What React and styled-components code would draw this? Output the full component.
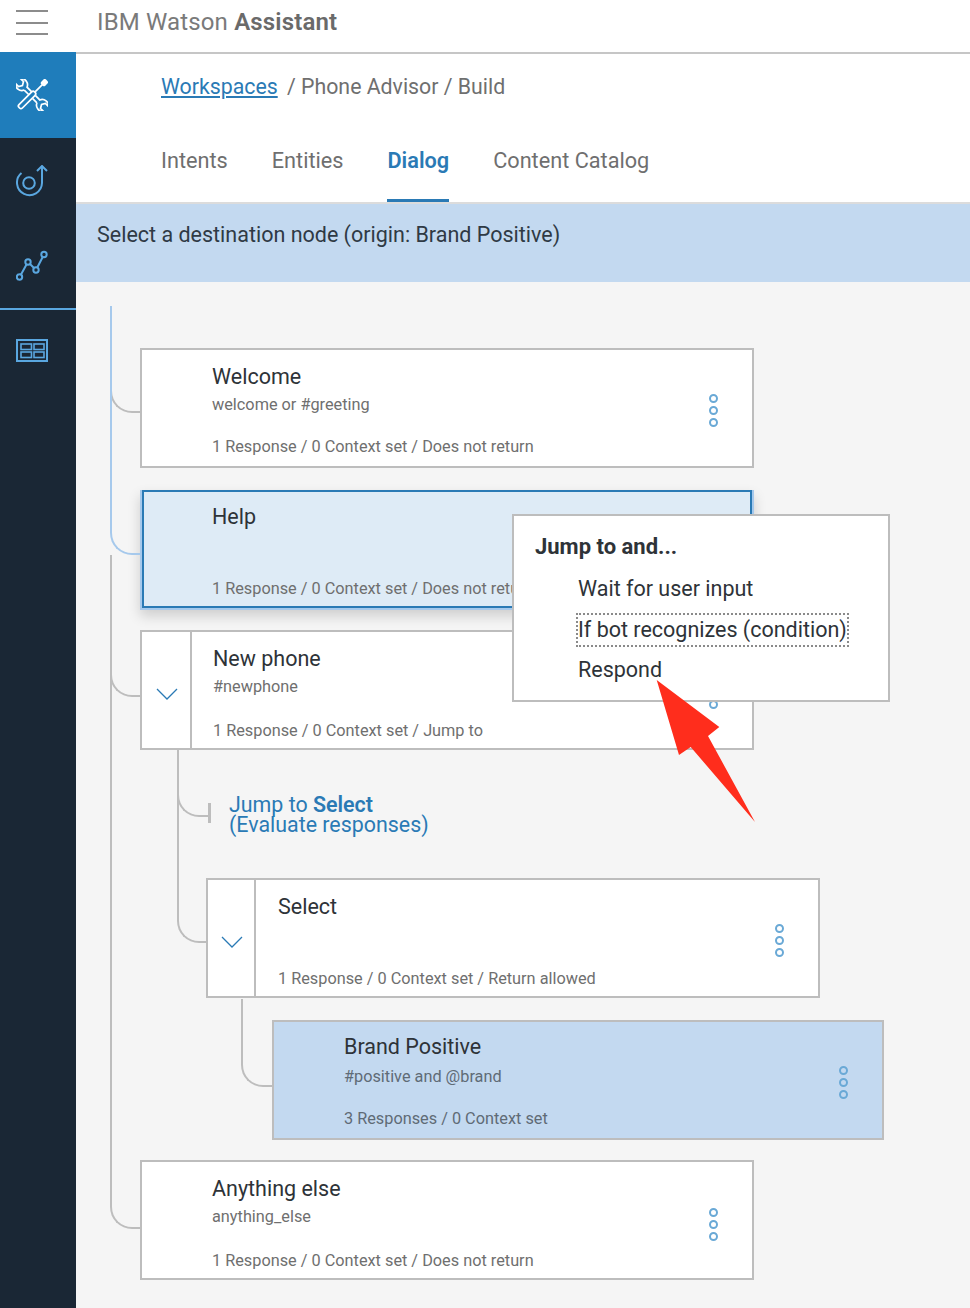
import styled, { createGlobalStyle } from "styled-components";

const GlobalStyle = createGlobalStyle`
  html, body {
    margin: 0;
    padding: 0;
    background: #f5f5f5;
  }
  * {
    box-sizing: border-box;
  }
  body {
    font-family: "Roboto", "Liberation Sans", sans-serif;
  }
`;

const Page = styled.div`
  position: relative;
  width: 970px;
  height: 1308px;
  overflow: hidden;
  display: flex;
  flex-direction: column;
`;

const Header = styled.header`
  height: 52px;
  flex: none;
  display: flex;
  background: #fff;
  padding-top: 10px;
`;

const Burger = styled.div`
  width: 32px;
  height: 25px;
  margin: 0 49px 0 16px;
  display: flex;
  flex-direction: column;
  justify-content: space-between;
  span {
    height: 2px;
    background: #8c8c8c;
  }
`;

const Brand = styled.div`
  font-size: 24px;
  letter-spacing: 0.15px;
  line-height: 25px;
  color: #7a7a7a;
  b {
    font-weight: 600;
    color: #6a6a6a;
  }
`;

const Body = styled.div`
  flex: 1;
  display: flex;
  min-height: 0;
`;

const Sidebar = styled.nav`
  width: 76px;
  flex: none;
  background: #1a2735;
`;

const NavItem = styled.div`
  height: ${(p) => p.$h}px;
  display: flex;
  align-items: center;
  padding-left: 16px;
  background: ${(p) => (p.$active ? "#1f7dbb" : "transparent")};
  color: ${(p) => (p.$active ? "#fff" : "#5aa7e0")};
`;

const NavDivider = styled.div`
  height: 2px;
  background: #5aa7e0;
`;

const Main = styled.main`
  flex: 1;
  min-width: 0;
  display: flex;
  flex-direction: column;
  background: #f5f5f5;
`;

const TopBar = styled.div`
  height: 152px;
  flex: none;
  background: #fff;
  border-top: 2px solid #c6c6c6;
  border-bottom: 2px solid #dcdcdc;
  padding-left: 85px;
`;

const Crumbs = styled.div`
  height: 62px;
  padding-top: 19px;
  font-size: 21.3px;
  line-height: 28px;
  color: #6f6f6f;
  a {
    color: #2a7ab5;
    text-decoration: underline;
    margin-right: 4px;
  }
`;

const Tabs = styled.div`
  display: flex;
  gap: 44px;
  height: 86px;
`;

const Tab = styled.div`
  height: 86px;
  padding-top: 31px;
  font-size: 21.7px;
  line-height: 28px;
  color: ${(p) => (p.$active ? "#2a7ab5" : "#6f6f6f")};
  font-weight: ${(p) => (p.$active ? 600 : 400)};
  border-bottom: 3px solid ${(p) => (p.$active ? "#2a7ab5" : "transparent")};
`;

const Banner = styled.div`
  height: 78px;
  flex: none;
  background: #c3d9f0;
  padding: 17px 0 0 21px;
  font-size: 21.5px;
  line-height: 28px;
  color: #2f3a45;
`;

const Tree = styled.div`
  flex: 1;
  padding: 66px 0 0 64px;
`;

const Node = styled.div`
  position: relative;
  display: flex;
  height: 120px;
  width: ${(p) => p.$width || 614}px;
  margin-left: ${(p) => p.$indent || 0}px;
  margin-top: ${(p) => (p.$mt === undefined ? 20 : p.$mt)}px;
  background: ${(p) => (p.$bg ? p.$bg : "#fff")};
  border: 2px solid #bdbdbd;
  ${(p) =>
    p.$selected &&
    `
    z-index: 2;
    background: #deebf6;
    border-color: #a6c9ec;
    border-top-width: 0;
    box-shadow: inset 0 0 0 2px #2a7ab5, 0 6px 12px rgba(0, 0, 0, 0.16);
  `}
`;

const Toggle = styled.div`
  flex: none;
  width: ${(p) => p.$w}px;
  border-right: 2px solid #bdbdbd;
  display: flex;
  align-items: center;
  justify-content: center;
  padding: 8px 0 0 2px;
`;

const Content = styled.div`
  flex: 1;
  min-width: 0;
  display: flex;
  flex-direction: column;
  padding: 13px 0 9px ${(p) => p.$pad}px;
`;

const Title = styled.div`
  font-size: 21.5px;
  line-height: 28px;
  margin: ${(p) => (p.$up ? "-2px 0 2px" : "0")};
  color: #2e3338;
`;

const Condition = styled.div`
  font-size: 16.3px;
  line-height: 20px;
  margin-top: 4px;
  color: ${(p) => (p.$dark ? "#5f6b76" : "#6f6f6f")};
`;

const Footer = styled.div`
  margin-top: auto;
  margin-bottom: ${(p) => (p.$low ? -2 : 0)}px;
  font-size: 16.3px;
  line-height: 20px;
  color: ${(p) => (p.$dark ? "#5f6b76" : "#6f6f6f")};
`;

const Kebab = styled.div`
  flex: none;
  width: 78px;
  display: flex;
  flex-direction: column;
  align-items: center;
  justify-content: center;
  gap: 3px;
  padding-top: ${(p) => p.$drop}px;
`;

const Ring = styled.span`
  width: 9px;
  height: 9px;
  border-radius: 50%;
  border: 2px solid #6aa9d6;
`;

const Elbow = styled.div`
  position: absolute;
  right: 100%;
  bottom: ${(p) => p.$bottom}px;
  width: ${(p) => p.$w}px;
  height: ${(p) => p.$h}px;
  border-left: 2px solid ${(p) => (p.$blue ? "#a6c9ec" : "#bdbdbd")};
  border-bottom: 2px solid ${(p) => (p.$blue ? "#a6c9ec" : "#bdbdbd")};
  border-bottom-left-radius: 22px;
`;

const JumpRow = styled.div`
  position: relative;
  height: 88px;
  margin: 20px 0 0 68px;
  padding: 25px 0 0 21px;
  font-size: 21.4px;
  line-height: 20px;
  color: #2a7ab5;
  b {
    font-weight: 600;
  }
  &::before {
    content: "";
    position: absolute;
    left: 0;
    top: 33px;
    width: 3px;
    height: 20px;
    background: #bdbdbd;
  }
`;

const Popup = styled.div`
  position: absolute;
  left: 370px;
  top: 24px;
  width: 378px;
  height: 188px;
  background: #fff;
  border: 2px solid #bdbdbd;
  padding: 17px 0 0 21px;
  color: #2e3338;
`;

const PopupTitle = styled.div`
  font-size: 22px;
  font-weight: 700;
  line-height: 28px;
  margin-bottom: 13px;
`;

const PopupItem = styled.div`
  width: fit-content;
  margin-left: 43px;
  height: 30px;
  margin-bottom: 10.5px;
  font-size: 21.5px;
  line-height: 30px;
  white-space: nowrap;
  outline: ${(p) => (p.$focus ? "2px dotted #8a8a8a" : "none")};
`;

const Arrow = styled.svg`
  position: absolute;
  left: 650px;
  top: 670px;
  z-index: 5;
`;

const ToolsIcon = () => (
  <svg width="32" height="32" viewBox="0 0 32 32" fill="none" stroke="currentColor" strokeWidth="1.7">
    <g transform="translate(16 16) rotate(-45)">
      <path d="M-2 -9A6.5 6.5 0 0 1 -3.5 -20V-15.5L0 -13.5L3.5 -15.5V-20A6.5 6.5 0 0 1 2 -9V-2M-2 -2V-9" />
      <path d="M-2 9A6.5 6.5 0 0 0 -3.5 20V15.5L0 13.5L3.5 15.5V20A6.5 6.5 0 0 0 2 9V3M-2 3V9" />
    </g>
    <g transform="translate(16 16) rotate(45)">
      <rect x="-2" y="-20" width="4" height="5" rx="1" fill="currentColor" />
      <path d="M0 -15V-4" />
      <rect x="-2.4" y="-4" width="4.8" height="22" rx="2" />
    </g>
  </svg>
);

const TargetIcon = () => (
  <svg width="32" height="32" viewBox="0 0 32 32" fill="none" stroke="currentColor" strokeWidth="2">
    <circle cx="13" cy="18" r="5.8" />
    <path d="M5.5 8A12.5 12.5 0 1 0 26 18V1" />
    <path d="M21 6L26 1L31 6" />
  </svg>
);

const ChartIcon = () => (
  <svg width="32" height="32" viewBox="0 0 32 32" fill="none" stroke="currentColor" strokeWidth="2">
    <circle cx="3.5" cy="27" r="2.7" />
    <circle cx="12" cy="12" r="2.7" />
    <circle cx="20" cy="20" r="2.7" />
    <circle cx="28" cy="4.5" r="2.7" />
    <path d="M5 24.5L10.5 14.5M14 14L18 18M21.3 17.5L26.7 7" />
  </svg>
);

const BoardIcon = () => (
  <svg width="32" height="32" viewBox="0 0 32 32" fill="none" stroke="currentColor">
    <rect x="1" y="5" width="30" height="21" strokeWidth="2" />
    <rect x="5" y="9" width="10.5" height="5.5" strokeWidth="1.6" />
    <rect x="18" y="9" width="10" height="5.5" strokeWidth="1.6" />
    <rect x="5" y="17" width="10.5" height="5.5" strokeWidth="1.6" />
    <rect x="18" y="17" width="10" height="5.5" strokeWidth="1.6" />
  </svg>
);

const Chevron = () => (
  <svg width="22" height="12" viewBox="0 0 22 12" fill="none" stroke="#2a7ab5" strokeWidth="1.3">
    <path d="M1 1L11 11L21 1" />
  </svg>
);

const More = ({ drop = 4 }) => (
  <Kebab $drop={drop}>
    <Ring />
    <Ring />
    <Ring />
  </Kebab>
);

const App = () => {
  return (
    <Page>
      <GlobalStyle />
      <Header>
        <Burger>
          <span />
          <span />
          <span />
        </Burger>
        <Brand>
          IBM Watson <b>Assistant</b>
        </Brand>
      </Header>
      <Body>
        <Sidebar>
          <NavItem $h={86} $active>
            <ToolsIcon />
          </NavItem>
          <NavItem $h={86}>
            <TargetIcon />
          </NavItem>
          <NavItem $h={84}>
            <ChartIcon />
          </NavItem>
          <NavDivider />
          <NavItem $h={82}>
            <BoardIcon />
          </NavItem>
        </Sidebar>
        <Main>
          <TopBar>
            <Crumbs>
              <a>Workspaces</a> / Phone Advisor / Build
            </Crumbs>
            <Tabs>
              <Tab>Intents</Tab>
              <Tab>Entities</Tab>
              <Tab $active>Dialog</Tab>
              <Tab>Content Catalog</Tab>
            </Tabs>
          </TopBar>
          <Banner>Select a destination node (origin: Brand Positive)</Banner>
          <Tree>
            <Node $mt={0}>
              <Elbow $w={32} $h={30} $bottom={53} />
              <Content $pad={70}>
                <Title>Welcome</Title>
                <Condition>welcome or #greeting</Condition>
                <Footer>1 Response / 0 Context set / Does not return</Footer>
              </Content>
              <More />
            </Node>
            <Node $mt={22} $selected>
              <Elbow $w={32} $h={249} $bottom={53} $blue />
              <Content $pad={70}>
                <Title>Help</Title>
                <Footer>1 Response / 0 Context set / Does not return</Footer>
              </Content>
              <Popup>
                <PopupTitle>Jump to and...</PopupTitle>
                <PopupItem>Wait for user input</PopupItem>
                <PopupItem $focus>If bot recognizes (condition)</PopupItem>
                <PopupItem>Respond</PopupItem>
              </Popup>
            </Node>
            <Node>
              <Elbow $w={32} $h={60} $bottom={51} />
              <Toggle $w={50}>
                <Chevron />
              </Toggle>
              <Content $pad={21}>
                <Title>New phone</Title>
                <Condition>#newphone</Condition>
                <Footer $low>1 Response / 0 Context set / Jump to</Footer>
              </Content>
              <More />
            </Node>
            <JumpRow>
              <Elbow $w={31} $h={67} $bottom={41} />
              Jump to <b>Select</b>
              <br />
              (Evaluate responses)
            </JumpRow>
            <Node $indent={66}>
              <Elbow $w={31} $h={194} $bottom={53} />
              <Toggle $w={48}>
                <Chevron />
              </Toggle>
              <Content $pad={22}>
                <Title>Select</Title>
                <Footer $low>1 Response / 0 Context set / Return allowed</Footer>
              </Content>
              <More />
            </Node>
            <Node $indent={132} $width={612} $mt={22} $bg="#c3d9f0">
              <Elbow $w={33} $h={88} $bottom={51} />
              <Content $pad={70}>
                <Title $up>Brand Positive</Title>
                <Condition $dark>#positive and @brand</Condition>
                <Footer $dark>3 Responses / 0 Context set</Footer>
              </Content>
              <More />
            </Node>
            <Node>
              <Elbow $w={32} $h={674} $bottom={49} />
              <Content $pad={70}>
                <Title>Anything else</Title>
                <Condition>anything_else</Condition>
                <Footer $low>1 Response / 0 Context set / Does not return</Footer>
              </Content>
              <More drop={8} />
            </Node>
          </Tree>
        </Main>
      </Body>
      <Arrow width="120" height="160" viewBox="0 0 120 160">
        <path d="M6.7 10L69.3 57L58 66L105 152L40.7 77L29 85Z" fill="#ff2d1c" />
      </Arrow>
    </Page>
  );
};

export default App;
